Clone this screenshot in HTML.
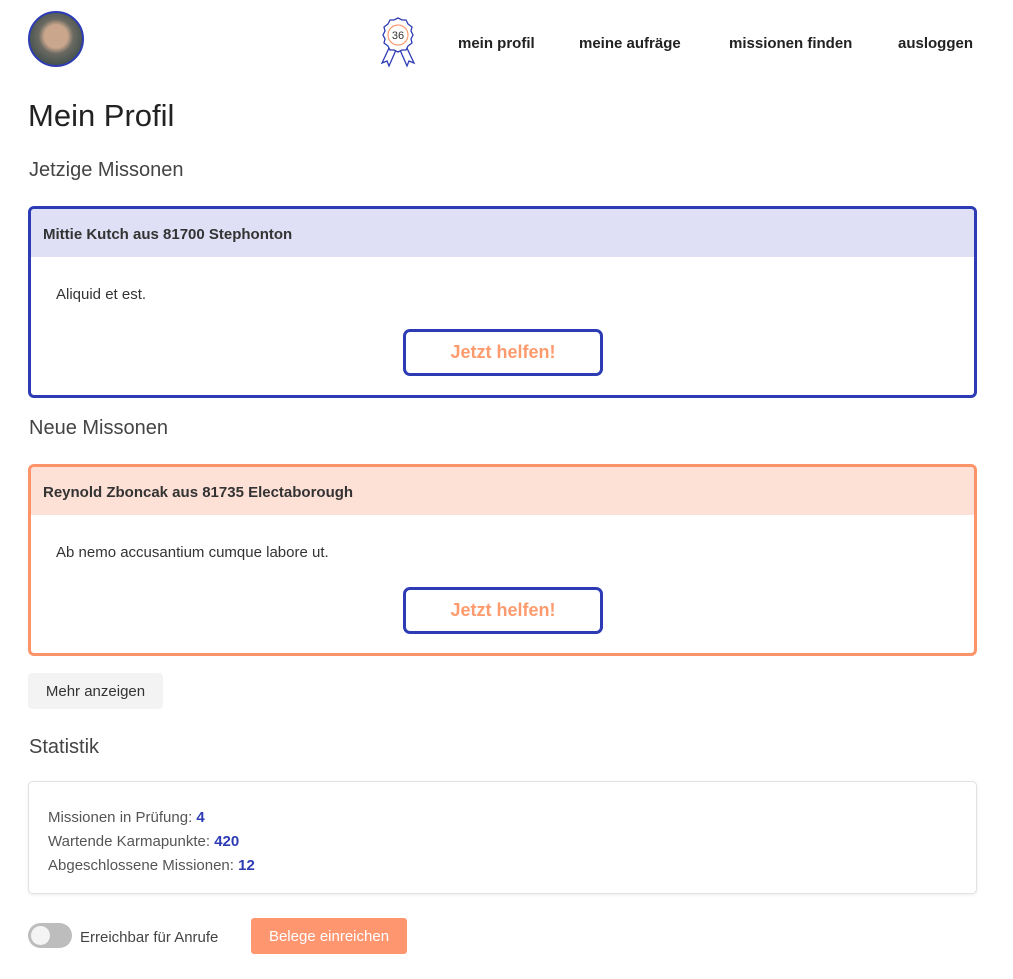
<!DOCTYPE html>
<html><head><meta charset="utf-8"><style>
*{box-sizing:border-box;margin:0;padding:0}
body{width:1013px;height:979px;background:#fff;font-family:"Liberation Sans",sans-serif;color:#333;position:relative;overflow:hidden}
.a{position:absolute}
.nav{font-weight:bold;font-size:15px;color:#222;top:35px}
.sec{font-size:20px;color:#444;left:29px}
.card{left:28px;width:949px;height:192px;border:3px solid;border-radius:6px}
.hd{height:48px;margin:0;border-radius:3px 3px 0 0;font-weight:bold;font-size:15px;padding:17px 12px;color:#333}
.body{font-size:15px;padding:29px 25px;color:#333}
.btn{left:372px;width:200px;height:47px;top:120px;border:3px solid #2d3bb5;border-radius:7px;color:#fe9b6e;font-weight:bold;font-size:18px;text-align:center;line-height:41px}
</style></head><body>
<div class="a" style="left:28px;top:11px;width:56px;height:56px;border-radius:50%;border:2px solid #2d3bb5;background:radial-gradient(circle at 50% 45%,#c9a68c 0 30%,#6a6a62 45%,#4b5550 70%,#2f3a3a 100%)"></div>
<svg class="a" style="left:378px;top:16px" width="40" height="52" viewBox="0 0 40 52">
<path d="M12 30 L4 47 L9 45 L11 50 L18 34 M28 30 L36 47 L31 45 L29 50 L22 34" fill="#fff" stroke="#2d3bb5" stroke-width="1.3"/>
<path d="M20 2 L24 4 L28 4 L30 8 L34 11 L33 15 L35 19 L33 23 L34 27 L30 30 L28 34 L24 34 L20 36 L16 34 L12 34 L10 30 L6 27 L7 23 L5 19 L7 15 L6 11 L10 8 L12 4 L16 4 Z" fill="#fff" stroke="#2d3bb5" stroke-width="1.3"/>
<circle cx="20" cy="19" r="10" fill="none" stroke="#fe9b6e" stroke-width="1.2"/>
<text x="20" y="23" font-size="11" text-anchor="middle" fill="#333" font-family="Liberation Sans">36</text>
</svg>
<div class="a nav" style="left:458px">mein profil</div>
<div class="a nav" style="left:579px">meine aufräge</div>
<div class="a nav" style="left:729px">missionen finden</div>
<div class="a nav" style="left:898px">ausloggen</div>
<div class="a" style="left:28px;top:98px;font-size:31px;color:#222">Mein Profil</div>
<div class="a sec" style="top:159px">Jetzige Missonen</div>
<div class="a card" style="top:206px;border-color:#2d3bb5">
<div class="hd" style="background:#dfe0f5">Mittie Kutch aus 81700 Stephonton</div>
<div class="body">Aliquid et est.</div>
<div class="a btn">Jetzt helfen!</div></div>
<div class="a sec" style="top:417px">Neue Missonen</div>
<div class="a card" style="top:464px;border-color:#fd9368">
<div class="hd" style="background:#fde0d6">Reynold Zboncak aus 81735 Electaborough</div>
<div class="body">Ab nemo accusantium cumque labore ut.</div>
<div class="a btn">Jetzt helfen!</div></div>
<div class="a" style="left:28px;top:673px;width:135px;height:36px;background:#f3f3f3;border-radius:4px;font-size:15px;line-height:38px;text-align:center;color:#333">Mehr anzeigen</div>
<div class="a sec" style="top:736px">Statistik</div>
<div class="a" style="left:28px;top:781px;width:949px;height:113px;border:1px solid #e2e2e2;border-radius:5px;box-shadow:0 1px 3px rgba(0,0,0,.08);padding:24px 19px;font-size:15px;line-height:24px;color:#555">
Missionen in Prüfung: <b style="color:#2d3bb5">4</b><br>Wartende Karmapunkte: <b style="color:#2d3bb5">420</b><br>Abgeschlossene Missionen: <b style="color:#2d3bb5">12</b></div>
<div class="a" style="left:28px;top:923px;width:44px;height:25px;border-radius:13px;background:#bdbdbd"><div class="a" style="left:3px;top:3px;width:19px;height:19px;border-radius:50%;background:#f4f4f4"></div></div>
<div class="a" style="left:80px;top:929px;font-size:15px;color:#444">Erreichbar für Anrufe</div>
<div class="a" style="left:251px;top:918px;width:156px;height:36px;background:#fe9670;border-radius:3px;color:#fff;font-size:15px;line-height:38px;text-align:center">Belege einreichen</div>
</body></html>
